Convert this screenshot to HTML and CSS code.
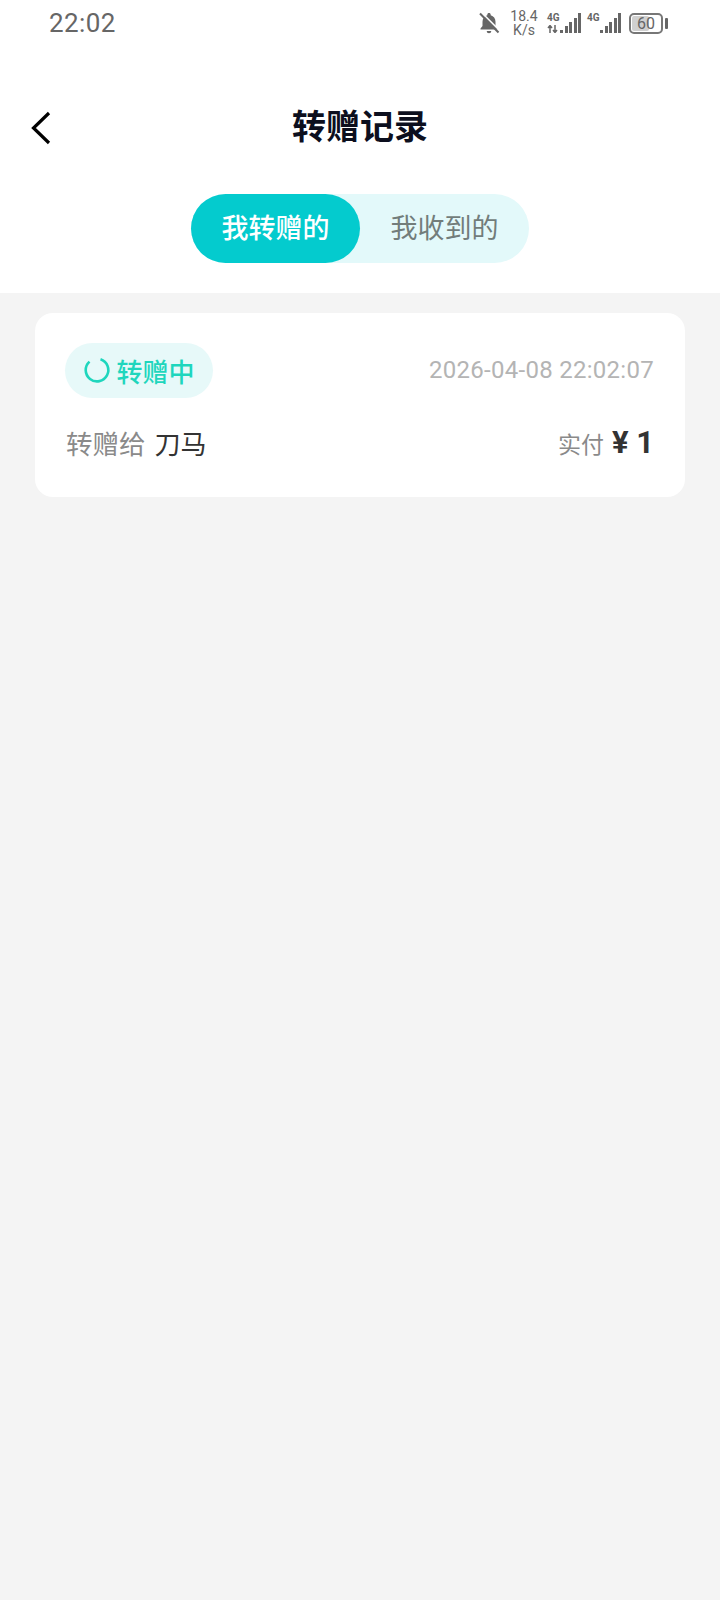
FILE: index.html
```html
<!DOCTYPE html>
<html>
<head>
  <title>转赠记录</title>
  <meta name="viewport" content="width=device-width, initial-scale=1">
  <link rel="stylesheet" href="styles.css">
</head>
<body>
<div class="top">
  <div class="status-bar">
    <span class="clock">22:02</span>
    <div class="status-icons">
      <svg class="bell" width="22" height="22" viewBox="0 0 22 22">
        <path d="M11 1c1 0 1.700.7 1.700 1.700v.6c2.900.8 4.800 3.300 4.800 6.400v4.300l2 2.500v1H2.500v-1l2-2.500V9.700c0-3 1.900-5.600 4.800-6.400v-.6C9.300 1.700 10 1 11 1z" fill="#666"/>
        <path d="M8.700 19h4.600a2.300 2.300 0 0 1-4.600 0z" fill="#666"/>
        <path d="M3.500 .5L22 19" stroke="#fff" stroke-width="1.600"/>
        <path d="M2 1.500L20.500 20.500" stroke="#666" stroke-width="2"/>
      </svg>
      <div class="speed"><span>18.4</span><span>K/s</span></div>
      <div class="signal first">
        <div class="net">
          <span>4G</span>
          <svg width="12" height="8" viewBox="0 0 12 8"><path d="M3 8V1M1 3l2-2.500L5 3M8 0v7M6 5l2 2.500L10 5" fill="none" stroke="#666" stroke-width="1.500"/></svg>
        </div>
        <div class="bars"><i class="b1"></i><i class="b2"></i><i class="b3"></i><i class="b4"></i><i class="b5"></i></div>
      </div>
      <div class="signal">
        <div class="net"><span>4G</span></div>
        <div class="bars"><i class="b1"></i><i class="b2"></i><i class="b3"></i><i class="b4"></i><i class="b5"></i></div>
      </div>
      <div class="battery">
        <div class="battery-body"><div class="battery-fill"></div><span>60</span></div>
        <div class="battery-cap"></div>
      </div>
    </div>
  </div>

  <div class="nav">
    <svg class="back" width="22" height="34" viewBox="0 0 22 34">
      <path d="M19 2L3.500 17 19 32" fill="none" stroke="#000" stroke-width="3.200"/>
    </svg>
    <h1>转赠记录</h1>
  </div>

  <div class="tabs-row">
    <div class="tabs">
      <div class="tab active">我转赠的</div>
      <div class="tab">我收到的</div>
    </div>
  </div>
</div>

<div class="list">
  <div class="card">
    <div class="card-row">
      <div class="state">
        <svg width="28" height="28" viewBox="0 0 28 28">
          <path d="M17.500 3.300A11.300 11.300 0 1 1 6.500 5.600" fill="none" stroke="#1fd6bd" stroke-width="2.600"/>
        </svg>
        <span>转赠中</span>
      </div>
      <div class="time">2026-04-08 22:02:07</div>
    </div>
    <div class="card-row second">
      <div class="receiver"><span class="label">转赠给</span><span class="name">刀马</span></div>
      <div class="paid"><span class="label small">实付</span><span class="amount">¥ 1</span></div>
    </div>
  </div>
</div>
</body>
</html>
```

FILE: styles.css
```css
* {
  box-sizing: border-box;
}

html, body {
  margin: 0;
  height: 100%;
}

body {
  width: 720px;
  min-height: 1600px;
  background-color: #f4f4f4;
  font-family: "Noto Sans CJK SC", Roboto, sans-serif;
}

.top {
  height: 293px;
  background-color: white;
}

.status-bar {
  height: 46px;
  padding: 0 52px 0 49px;
  display: flex;
  align-items: center;
  justify-content: space-between;
  color: #666;
}

.clock {
  font-family: Roboto, sans-serif;
  font-size: 26px;
  letter-spacing: .4px;
}

.status-icons {
  display: flex;
  align-items: center;
}

.bell {
  margin-right: 9px;
}

.speed {
  width: 30px;
  margin-right: 8px;
  display: flex;
  flex-direction: column;
  align-items: center;
  font-family: Roboto, sans-serif;
  font-size: 14px;
  line-height: 14px;
}

.signal {
  display: flex;
  align-items: flex-end;
  height: 20px;
  margin-right: 8px;
}

.signal.first {
  margin-right: 6px;
}

.net {
  width: 13px;
  height: 20px;
  display: flex;
  flex-direction: column;
  justify-content: space-between;
  font-family: Roboto, sans-serif;
  font-size: 10px;
  font-weight: 700;
  line-height: 9px;
}

.bars {
  display: flex;
  align-items: flex-end;
  gap: 1.500px;
  height: 20px;
}

.bars i {
  width: 3px;
  background-color: #666;
}

.b1 { height: 3px; }
.b2 { height: 7px; }
.b3 { height: 11px; }
.b4 { height: 15px; }
.b5 { height: 20px; }

.battery {
  display: flex;
  align-items: center;
  gap: 2px;
}

.battery-body {
  position: relative;
  width: 34px;
  height: 21px;
  border: 2px solid #777;
  border-radius: 5px;
  display: flex;
  align-items: center;
  justify-content: center;
  font-family: Roboto, sans-serif;
  font-size: 16px;
}

.battery-fill {
  position: absolute;
  left: 1px;
  top: 1px;
  bottom: 1px;
  width: 58%;
  background-color: #d0d0d0;
  border-radius: 2px;
}

.battery-body span {
  position: relative;
}

.battery-cap {
  width: 3px;
  height: 11px;
  background-color: #666;
  border-radius: 1px;
}

.nav {
  height: 68px;
  margin-top: 46px;
  display: grid;
  grid-template-columns: 1fr auto 1fr;
  align-items: center;
}

.back {
  margin-left: 30px;
  margin-top: 4px;
}

.nav h1 {
  margin: 0 0 4px;
  font-size: 34px;
  font-weight: 700;
  color: #0c0f1e;
}

.tabs-row {
  margin-top: 34px;
  display: flex;
  justify-content: center;
}

.tabs {
  width: 338px;
  height: 69px;
  border-radius: 35px;
  background-color: #e3f9fa;
  display: flex;
}

.tab {
  width: 169px;
  height: 69px;
  padding-bottom: 4px;
  border-radius: 35px;
  display: flex;
  align-items: center;
  justify-content: center;
  font-size: 27px;
  color: #727d7b;
}

.tab.active {
  background-color: #04cbce;
  color: white;
  font-weight: 500;
}

.list {
  padding: 20px 35px;
}

.card {
  height: 184px;
  padding: 30px 31px 0 30px;
  background-color: white;
  border-radius: 18px;
}

.card-row {
  display: flex;
  align-items: center;
  justify-content: space-between;
}

.card-row.second {
  margin-top: 25px;
  padding-left: 1px;
}

.state {
  width: 148px;
  height: 55px;
  padding-bottom: 1px;
  border-radius: 28px;
  background-color: #e7f9f9;
  display: flex;
  align-items: center;
  justify-content: center;
  gap: 5px;
  font-size: 26px;
  font-weight: 500;
  color: #1fd6bd;
}

.time {
  padding-bottom: 2px;
  font-family: Roboto, sans-serif;
  font-size: 24px;
  letter-spacing: .28px;
  color: #b4b4b4;
}

.receiver, .paid {
  display: flex;
  align-items: center;
}

.label {
  font-size: 26.500px;
  color: #8a8a8a;
}

.label.small {
  font-size: 23px;
}

.name {
  margin-left: 9px;
  font-size: 26px;
  color: #333;
}

.amount {
  margin-left: 8px;
  font-family: Roboto, sans-serif;
  font-size: 31px;
  font-weight: 700;
  color: #333;
}
```
